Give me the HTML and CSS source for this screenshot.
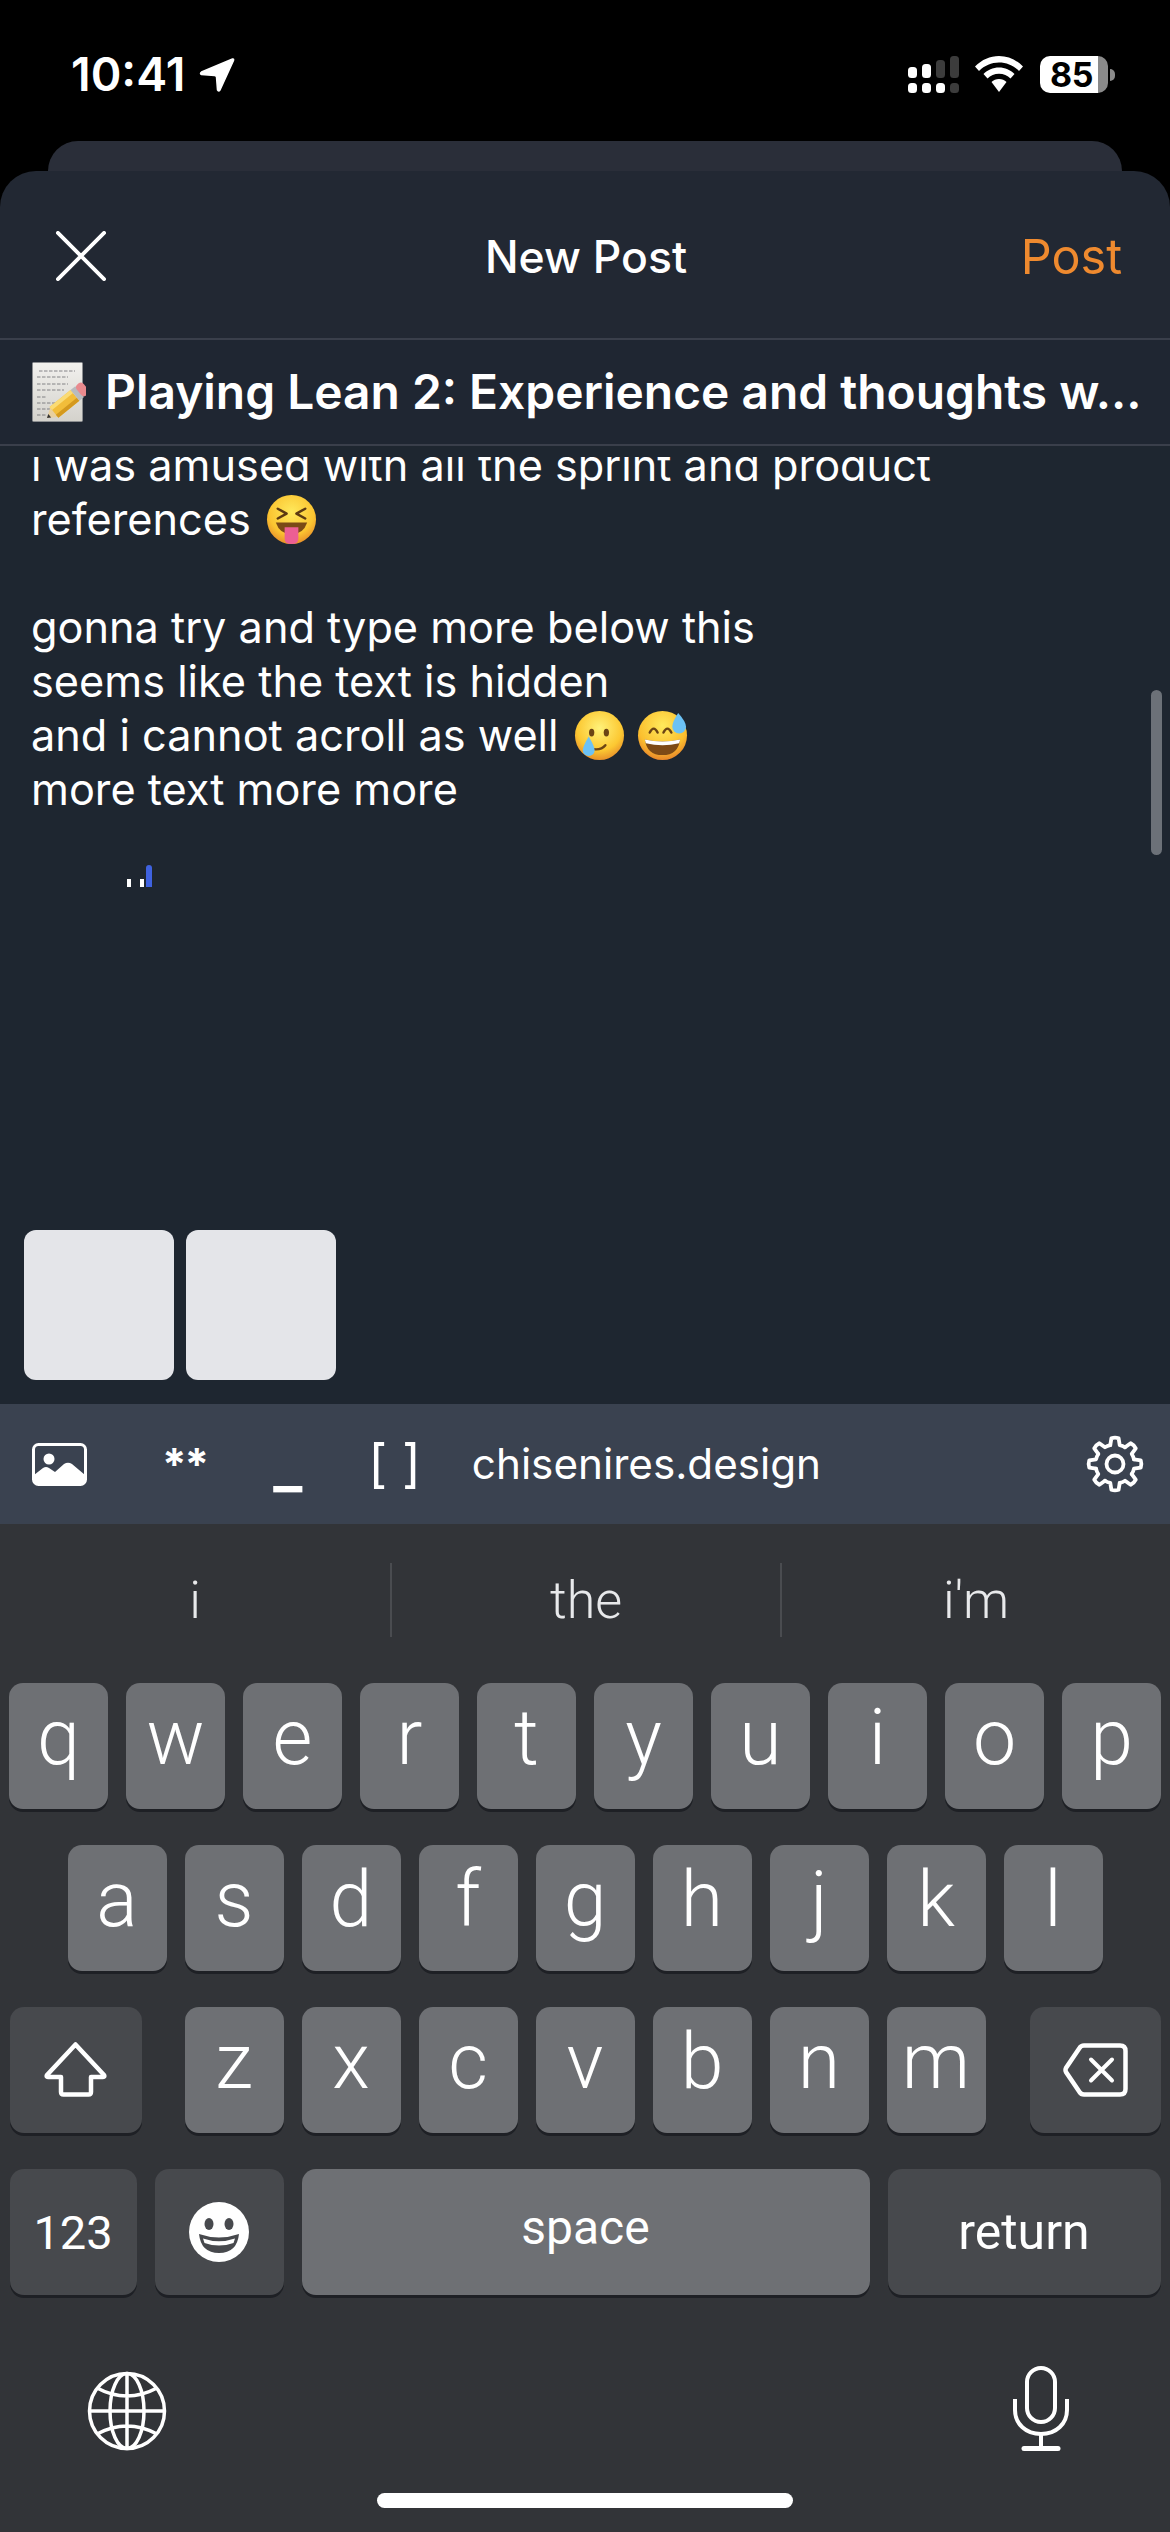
FILE: index.html
```html
<!DOCTYPE html>
<html lang="en">
<head>
<meta charset="utf-8">
<title>New Post</title>
<link rel="stylesheet" href="styles.css">
</head>
<body>
<div class="phone">
  <div class="status">
    <div class="status-left">
      <span class="time">10:41</span>
      <svg class="loc" viewBox="0 0 36 36"><path d="M33.500 2 L2.500 15 Q0.500 16.500 2.500 17.500 L15.500 18.500 Q17 18.500 17.500 20 L18.500 33 Q19.500 35 21 33 L34.500 3.500 Q35 1.500 33.500 2 Z" fill="#fff" stroke="#fff" stroke-width="1.500" stroke-linejoin="round"/></svg>
    </div>
    <div class="status-right">
      <svg class="signal" viewBox="0 0 52 38">
        <g fill="#fff">
          <rect x="1" y="11" width="9" height="11" rx="3.500"/><rect x="15" y="8" width="9" height="14" rx="3.500"/>
          <rect x="1" y="27" width="9" height="10" rx="3.500"/><rect x="15" y="27" width="9" height="10" rx="3.500"/><rect x="29" y="27" width="9" height="10" rx="3.500"/>
        </g>
        <g fill="#3c3c3c">
          <rect x="29" y="4" width="9" height="18" rx="3.500"/><rect x="43" y="0" width="9" height="22" rx="3.500"/><rect x="43" y="27" width="9" height="10" rx="3.500"/>
        </g>
      </svg>
      <svg class="wifi" viewBox="0 0 48 36">
        <path d="M24 0 C33 0 41 3.500 48 10.500 L44 15 C38.500 9.500 31.500 6.500 24 6.500 C16.500 6.500 9.500 9.500 4 15 L0 10.500 C7 3.500 15 0 24 0 Z" fill="#fff"/>
        <path d="M24 11.500 C30 11.500 35.500 14 39.500 18 L35.500 22.500 C32.500 19.500 28.500 17.800 24 17.800 C19.500 17.800 15.500 19.500 12.500 22.500 L8.500 18 C12.500 14 18 11.500 24 11.500 Z" fill="#fff"/>
        <path d="M24 23 C27 23 29.500 24 31.500 26 L24 36 L16.500 26 C18.500 24 21 23 24 23 Z" fill="#fff"/>
      </svg>
      <div class="battery"><div class="batt-body"><span class="batt-num">85</span></div><span class="batt-nub"></span></div>
    </div>
  </div>

  <div class="back-sheet"></div>

  <div class="sheet">
    <header class="nav">
      <svg class="close" viewBox="0 0 52 52"><path d="M2 2 L50 50 M50 2 L2 50" stroke="#fff" stroke-width="4" stroke-linecap="round"/></svg>
      <h1 class="nav-title">New Post</h1>
      <span class="nav-post">Post</span>
    </header>

    <div class="title-row">
      <svg class="memo" viewBox="0 0 54 60">
        <defs><linearGradient id="pp" x1="0" y1="0" x2="0" y2="1"><stop offset="0" stop-color="#f2f1ee"/><stop offset="1" stop-color="#d4d2cc"/></linearGradient></defs>
        <rect x="0.500" y="0.500" width="50" height="59" rx="1" fill="url(#pp)" stroke="#8b8d90"/>
        <g stroke="#6a6a70" stroke-width="0.800" fill="none" stroke-dasharray="3.500 1.500">
          <path d="M7 9 H43"/><path d="M5 15 H36"/><path d="M5 22 H36"/><path d="M5 28 H32"/><path d="M5 35 H15"/><path d="M5 41 H24"/><path d="M5 47 H18"/><path d="M5 53 H14"/>
        </g>
        <g transform="translate(15 56) rotate(-39)">
          <path d="M0 0 L9 -6 L9 6 Z" fill="#e8cf9e"/>
          <path d="M0 0 L3.500 -2.300 L3.500 2.300 Z" fill="#333"/>
          <rect x="9" y="-7" width="27" height="14" fill="#f2bd3a"/>
          <rect x="9" y="-7" width="27" height="4" fill="#fadb74"/>
          <rect x="9" y="3" width="27" height="4" fill="#d4991f"/>
          <rect x="36" y="-7" width="6" height="14" fill="#b8bbbf"/>
          <rect x="41" y="-7" width="9" height="14" rx="4" fill="#e98a8e"/>
        </g>
      </svg>
      <span class="title-text">Playing Lean 2: Experience and thoughts w...</span>
    </div>

    <div class="post-body">
      <div class="editor">
        <div class="lines">
          <div class="line">i was amused with all the sprint and product</div>
          <div class="line">references <svg class="emoji" viewBox="0 0 52 52">
            <defs><radialGradient id="f1" cx="50%" cy="35%" r="65%"><stop offset="0" stop-color="#ffe95c"/><stop offset="0.700" stop-color="#fbc531"/><stop offset="1" stop-color="#e8912a"/></radialGradient></defs>
            <circle cx="26" cy="26" r="25" fill="url(#f1)"/>
            <path d="M12 15 L21 20 L12 25 M40 15 L31 20 L40 25" fill="none" stroke="#5c3a12" stroke-width="2.500" stroke-linecap="round" stroke-linejoin="round"/>
            <path d="M10 29 H42 Q38 41 26 41 Q14 41 10 29 Z" fill="#7a4a16"/>
            <path d="M19 34 H33 V45 Q33 51 26 51 Q19 51 19 45 Z" fill="#ec5f93"/>
          </svg></div>
          <div class="line">&nbsp;</div>
          <div class="line">gonna try and type more below this</div>
          <div class="line">seems like the text is hidden</div>
          <div class="line">and i cannot acroll as well <svg class="emoji" viewBox="0 0 52 52">
            <defs><radialGradient id="f2" cx="50%" cy="35%" r="65%"><stop offset="0" stop-color="#fff27a"/><stop offset="0.700" stop-color="#fcc832"/><stop offset="1" stop-color="#e8912a"/></radialGradient></defs>
            <circle cx="26" cy="26" r="25" fill="url(#f2)"/>
            <ellipse cx="18" cy="23" rx="2.700" ry="4" fill="#6b4414"/><ellipse cx="33" cy="23" rx="2.700" ry="4" fill="#6b4414"/>
            <path d="M20 40 Q28 41 32 36" fill="none" stroke="#6b4414" stroke-width="2.500" stroke-linecap="round"/>
            <path d="M15 27 Q21 37 21 41 A6 6 0 0 1 9 41 Q9 37 15 27 Z" fill="#6cc2f5"/>
          </svg> <svg class="emoji emoji-tight" viewBox="0 0 52 52">
            <defs><radialGradient id="f3" cx="50%" cy="30%" r="70%"><stop offset="0" stop-color="#ffe95c"/><stop offset="0.700" stop-color="#fbbf2e"/><stop offset="1" stop-color="#e8862a"/></radialGradient></defs>
            <circle cx="26" cy="26" r="25" fill="url(#f3)"/>
            <path d="M13 23 Q17 15 21 23 M27 23 Q31 15 35 23" fill="none" stroke="#6b4414" stroke-width="2.500" stroke-linecap="round"/>
            <path d="M8 30 Q26 34 44 30 Q42 46 26 46 Q10 46 8 30 Z" fill="#7d4a16"/>
            <path d="M8 30 Q26 34 44 30 L43 34 Q26 38 9 34 Z" fill="#fff"/>
            <path d="M42 3 Q50 12 50 17 A7 7 0 0 1 36 17 Q36 12 42 3 Z" fill="#6cc2f5"/>
          </svg></div>
          <div class="line">more text more more</div>
          <div class="caret-row"><span class="dot"></span><span class="dot"></span><span class="caret"></span></div>
        </div>
      </div>
      <div class="thumbs"><div class="thumb"></div><div class="thumb"></div></div>
      <div class="scrollbar"></div>
    </div>

    <div class="toolbar">
      <svg class="tb-image" viewBox="0 0 55 43">
        <rect x="1.500" y="1.500" width="52" height="40" rx="5" fill="none" stroke="#fff" stroke-width="3"/>
        <circle cx="17" cy="16" r="5.500" fill="#fff"/>
        <path d="M2 32 L11 25 Q14 23 17 25 L23 29 L32 21 Q36 18.500 40 21 L53 32 V38 Q53 41 50 41 H5 Q2 41 2 38 Z" fill="#fff"/>
      </svg>
      <span class="tb-item tb-bold">**</span>
      <span class="tb-item tb-under">_</span>
      <span class="tb-item tb-link">[ ]</span>
      <span class="tb-domain">chisenires.design</span>
      <svg class="tb-gear" viewBox="-30 -30 60 60" fill="none" stroke="#fff" stroke-width="3.800" stroke-linejoin="round" stroke-linecap="round">
        <circle cx="0" cy="0" r="8.500"/>
        <path id="tooth" d="M-4.720 -18.920 L-3.620 -25.750 Q0 -27 3.620 -25.750 L4.720 -18.920 Q7.600 -18.400 10.040 -16.710"/>
        <use href="#tooth" transform="rotate(45)"/>
        <use href="#tooth" transform="rotate(90)"/>
        <use href="#tooth" transform="rotate(135)"/>
        <use href="#tooth" transform="rotate(180)"/>
        <use href="#tooth" transform="rotate(225)"/>
        <use href="#tooth" transform="rotate(270)"/>
        <use href="#tooth" transform="rotate(315)"/>
      </svg>
    </div>

    <div class="keyboard">
      <div class="suggest">
        <span class="sg">i</span><span class="sg sg-sep">the</span><span class="sg sg-sep">i'm</span>
      </div>

      <div class="kb-row">
        <span class="key">q</span><span class="key">w</span><span class="key">e</span><span class="key">r</span><span class="key">t</span><span class="key">y</span><span class="key">u</span><span class="key">i</span><span class="key">o</span><span class="key">p</span>
      </div>
      <div class="kb-row">
        <span class="key">a</span><span class="key">s</span><span class="key">d</span><span class="key">f</span><span class="key">g</span><span class="key">h</span><span class="key">j</span><span class="key">k</span><span class="key">l</span>
      </div>
      <div class="kb-row">
        <span class="key key-fn key-shift"><svg class="ic-shift" viewBox="0 0 63 55"><path d="M31.500 2.500 L60 33 Q61 35 59 35 H47 V50 Q47 52.500 44.500 52.500 H19.500 Q17 52.500 17 50 V35 H4 Q2 35 3 33 Z" fill="none" stroke="#fff" stroke-width="4.500" stroke-linejoin="round"/></svg></span>
        <span class="key">z</span><span class="key">x</span><span class="key">c</span><span class="key">v</span><span class="key">b</span><span class="key">n</span><span class="key">m</span>
        <span class="key key-fn key-del"><svg class="ic-del" viewBox="0 0 65 54"><path d="M21 2.500 H57 Q62.500 2.500 62.500 8 V46 Q62.500 51.500 57 51.500 H21 Q18 51.500 16.500 49 L3 29 Q2 27 3 25 L16.500 5 Q18 2.500 21 2.500 Z" fill="none" stroke="#fff" stroke-width="4.500"/><path d="M28 16.500 L49 37.500 M49 16.500 L28 37.500" stroke="#fff" stroke-width="4" stroke-linecap="round"/></svg></span>
      </div>
      <div class="kb-row kb-row-4">
        <span class="key key-fn key-123 key-label">123</span>
        <span class="key key-fn key-emoji"><svg class="ic-smile" viewBox="0 0 60 60"><circle cx="30" cy="30" r="30" fill="#fff"/><ellipse cx="20" cy="22" rx="4.500" ry="6" fill="#47494d"/><ellipse cx="40" cy="22" rx="4.500" ry="6" fill="#47494d"/><path d="M10 32 Q30 39 50 32 Q48 51 30 51 Q12 51 10 32 Z" fill="#47494d"/><path d="M14 36.500 Q30 42 46 36.500 L44.500 41 Q30 46 15.500 41 Z" fill="#fff"/></svg></span>
        <span class="key key-space key-label">space</span>
        <span class="key key-fn key-return key-label">return</span>
      </div>

      <div class="kb-bottom">
        <svg class="ic-globe" viewBox="0 0 80 80" fill="none" stroke="#fff" stroke-width="3.500">
          <circle cx="40" cy="40" r="37.500"/>
          <ellipse cx="40" cy="40" rx="17" ry="37.500"/>
          <path d="M40 2.500 V77.500 M2.500 40 H77.500 M10 17 Q40 33 70 17 M10 63 Q40 47 70 63"/>
        </svg>
        <svg class="ic-mic" viewBox="0 0 56 85" fill="none" stroke="#fff" stroke-width="4">
          <rect x="14" y="2" width="28" height="54" rx="14"/>
          <path d="M2 33 V44 C2 58 13 68 28 68 C43 68 54 58 54 44 V33"/>
          <path d="M28 68 V81"/>
          <path d="M11 82.500 H45" stroke-width="5" stroke-linecap="round"/>
        </svg>
      </div>
      <div class="home-bar"></div>
    </div>
  </div>
</div>
</body>
</html>
```

FILE: styles.css
```css
* { box-sizing: border-box; }
html, body { margin: 0; padding: 0; background: #000; }
body { font-family: Inter, "Liberation Sans", sans-serif; color: #fff; }

.phone { width: 1170px; height: 2532px; display: flex; flex-direction: column; overflow: hidden; background: #000; }

/* status bar */
.status { height: 141px; flex: none; display: flex; justify-content: space-between; align-items: flex-start; padding: 0 55px 0 71px; }
.status-left { display: flex; align-items: flex-start; padding-top: 48px; gap: 14px; }
.time { font-size: 46.500px; line-height: 52px; font-weight: 600; }
.loc { width: 36px; height: 36px; margin-top: 9px; }
.status-right { display: flex; align-items: flex-start; padding-top: 56px; }
.signal { width: 52px; height: 38px; margin-right: 16px; }
.wifi { width: 48px; height: 36px; margin-right: 17px; }
.battery { display: flex; align-items: center; height: 37px; }
.batt-body { width: 68px; height: 37px; border-radius: 10px; background: linear-gradient(90deg, #fff 85%, #8a8a8a 85%); color: #000; display: flex; align-items: center; padding-left: 10px; }
.batt-num { font-size: 34px; line-height: 37px; font-weight: 700; letter-spacing: -0.500px; }
.batt-nub { width: 5px; height: 12px; margin-left: 2px; background: #8a8a8a; border-radius: 0 6px 6px 0; }

.back-sheet { height: 30px; flex: none; margin: 0 48px; background: #2a2e39; border-radius: 30px 30px 0 0; }

.sheet { flex: 1; display: flex; flex-direction: column; background: #222833; border-radius: 36px 36px 0 0; overflow: hidden; min-height: 0; }

/* nav */
.nav { height: 169px; flex: none; display: grid; grid-template-columns: 1fr auto 1fr; align-items: flex-start; padding: 60px 48px 0 55px; border-bottom: 2px solid #3a3f4b; }
.close { width: 52px; height: 50px; }
.nav-title { margin: 0 5px 0 0; font-size: 44.500px; line-height: 52px; font-weight: 500; }
.nav-post { justify-self: end; font-size: 48.500px; line-height: 52px; font-weight: 400; color: #ef8a2f; }

/* title */
.title-row { height: 106px; flex: none; display: flex; align-items: center; gap: 19px; padding: 0 0 0 32px; background: #1f2632; border-bottom: 2px solid #3a3f4b; }
.memo { width: 54px; height: 60px; flex: none; }
.title-text { font-size: 47.900px; line-height: 56px; font-weight: 600; white-space: nowrap; }

/* body */
.post-body { position: relative; flex: 1; min-height: 0; display: flex; flex-direction: column; background: #1e2630; }
.editor { flex: 1; min-height: 0; margin-top: 11px; overflow: hidden; padding-left: 31px; }
.lines { margin-top: -19px; }
.line { font-size: 43.250px; line-height: 54px; height: 54px; white-space: nowrap; font-weight: 400; }
.emoji { width: 51px; height: 51px; vertical-align: -10px; margin-left: 3px; }
.emoji-tight { margin-left: 0; }
.caret-row { height: 71px; display: flex; align-items: flex-end; padding-left: 96px; }
.dot { width: 4px; height: 8px; background: #fff; margin-right: 9px; }
.dot + .dot { margin-right: 2px; }
.caret { width: 6px; height: 22px; background: #3f62e0; border-radius: 3px 3px 0 0; }
.thumbs { flex: none; display: flex; gap: 12px; padding: 0 24px 24px; }
.thumb { width: 150px; height: 150px; border-radius: 12px; background: #e4e5e9; }
.scrollbar { position: absolute; right: 8px; top: 244px; width: 11px; height: 165px; border-radius: 6px; background: #6c7178; }

/* toolbar */
.toolbar { height: 120px; flex: none; display: flex; align-items: center; background: #3a4250; padding: 0 25px 0 32px; }
.tb-image { width: 55px; height: 43px; }
.tb-item { font-weight: 600; font-size: 42px; line-height: 52px; }
.tb-bold { margin-left: 75px; font-size: 44px; font-weight: 700; letter-spacing: -2px; }
.tb-under { margin-left: 66px; font-size: 62px; }
.tb-link { margin-left: 66px; font-size: 52px; font-weight: 400; }
.tb-domain { margin-left: 51px; font-size: 42.200px; line-height: 52px; }
.tb-gear { width: 60px; height: 60px; margin-left: auto; }

/* keyboard */
.keyboard { flex: none; height: 1008px; background: #323438; display: flex; flex-direction: column; }
.suggest { height: 159px; flex: none; display: flex; padding-top: 39px; }
.sg { width: 390px; height: 74px; text-align: center; font-family: Roboto, Inter, sans-serif; font-size: 52px; line-height: 76px; font-weight: 300; color: #e8e9eb; }
.sg-sep { border-left: 2px solid #4a4c50; }
.kb-row { display: flex; gap: 18px; height: 126px; margin-bottom: 36px; padding: 0 9px; justify-content: center; flex: none; }
.key { width: 99px; flex: none; background: #6e7074; border-radius: 14px; box-shadow: 0 3px 0 #1e2025; display: flex; justify-content: center; align-items: flex-start; font-family: Roboto, Inter, sans-serif; font-size: 77px; line-height: 111px; font-weight: 300; color: #fff; }
.key-fn { background: #47494d; }
.key-shift { width: 132px; margin-right: 25px; }
.key-del { width: 131px; margin-left: 26px; }
.ic-shift { width: 63px; height: 55px; margin-top: 35px; }
.ic-del { width: 65px; height: 54px; margin-top: 36px; }
.kb-row-4 { margin-bottom: 0; }
.kb-row-4 .key-label { font-size: 48px; line-height: 127px; font-weight: 400; }
.kb-row-4 .key-123 { width: 127px; font-size: 47px; }
.key-emoji { width: 129px; }
.ic-smile { width: 60px; height: 60px; margin-top: 33px; }
.kb-row-4 .key-space { width: 568px; line-height: 117px; }
.kb-row-4 .key-return { width: 273px; font-size: 50px; }
.kb-bottom { display: flex; justify-content: space-between; align-items: flex-end; height: 85px; margin-top: 71px; padding: 0 101px 0 87px; flex: none; }
.ic-globe { width: 80px; height: 80px; }
.ic-mic { width: 56px; height: 85px; }
.home-bar { width: 416px; height: 15px; margin: 42px auto 0; background: #fff; border-radius: 8px; flex: none; }
```
